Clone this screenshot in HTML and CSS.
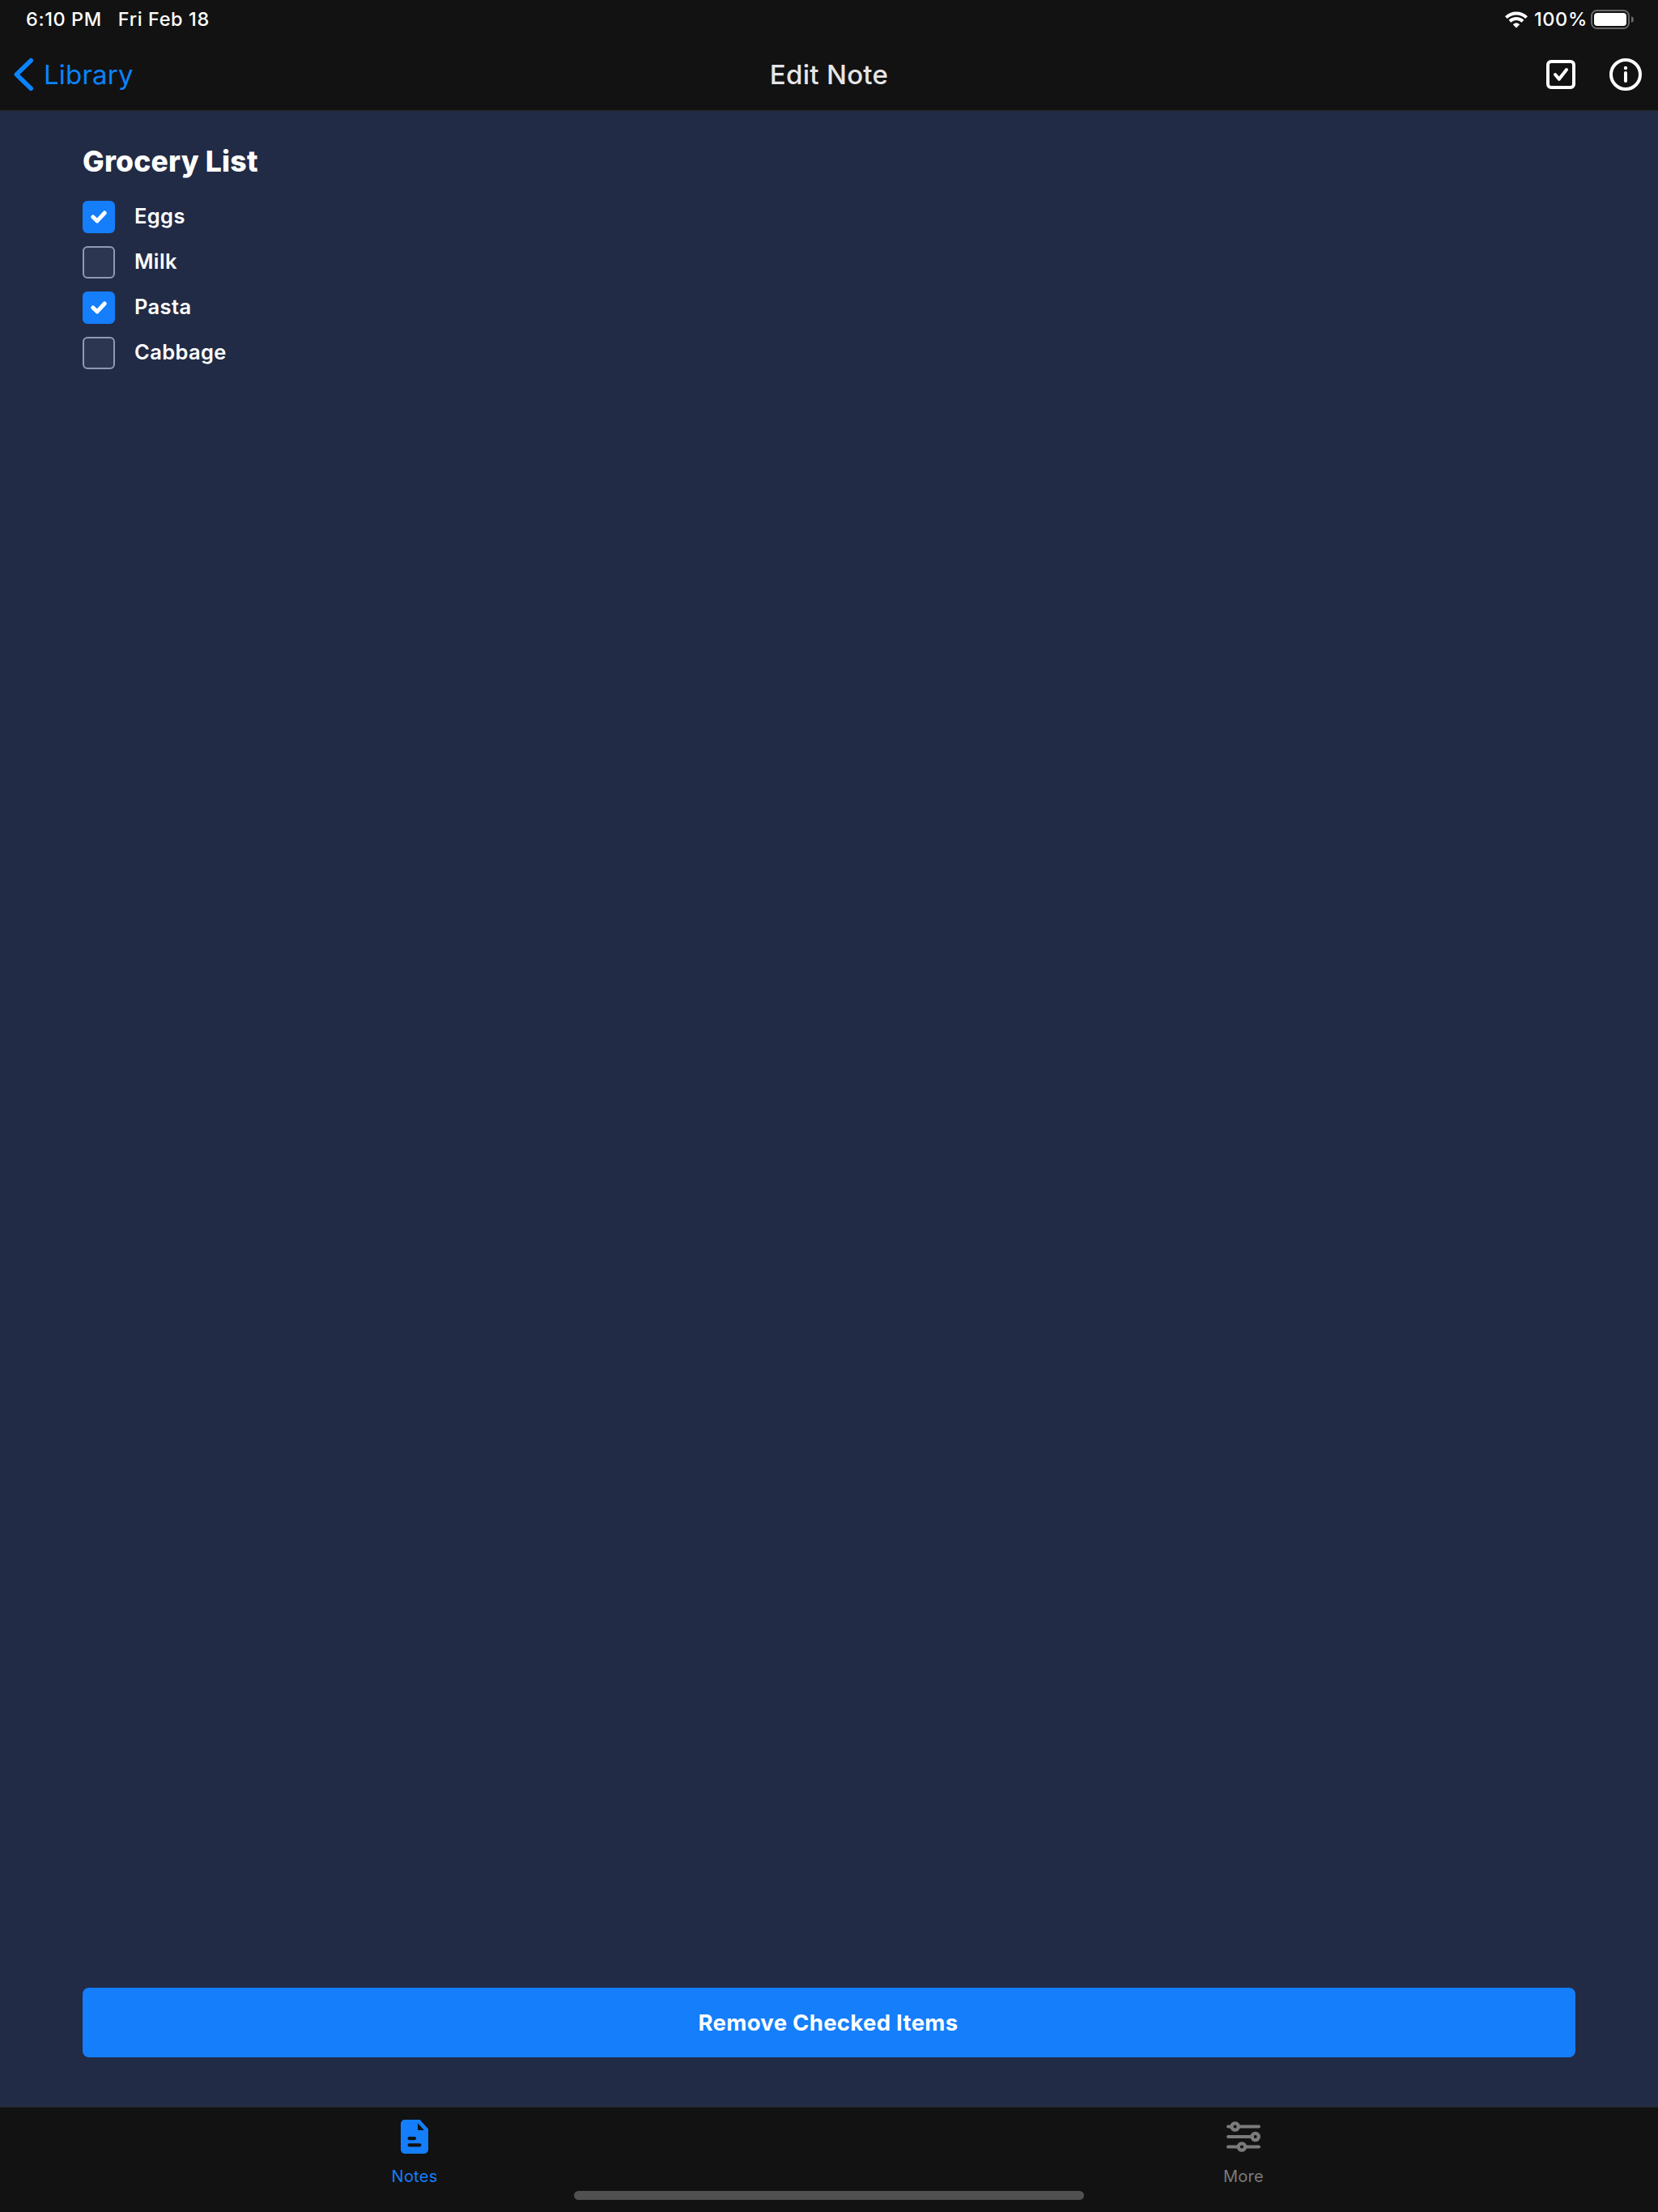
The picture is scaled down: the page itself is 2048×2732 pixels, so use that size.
FILE: index.html
```html
<!DOCTYPE html>
<html lang="en">
<head>
<meta charset="utf-8">
<title>Edit Note</title>
<link rel="stylesheet" href="styles.css">
</head>
<body>
<div class="app">
  <header class="top">
    <div class="status">
      <div class="status-left"><span class="time">6:10 PM</span><span class="date">Fri Feb 18</span></div>
      <div class="status-right">
        <svg class="wifi" width="28" height="21" viewBox="0 0 28 21" fill="none" stroke="#fff" stroke-width="4">
          <path d="M1.4 7.6A18 18 0 0 1 26.6 7.6"/>
          <path d="M6 12.2A11.6 11.6 0 0 1 22 12.2"/>
          <path d="M14 20.6L9.8 16.3Q14 12.4 18.2 16.3Z" fill="#fff" stroke="none"/>
        </svg>
        <span class="percent">100%</span>
        <svg class="battery" width="53" height="24" viewBox="0 0 53 24">
          <rect x="1" y="1" width="46" height="22" rx="6.5" fill="none" stroke="#68686a" stroke-width="2"/>
          <rect x="4" y="4" width="40" height="16" rx="4" fill="#fff"/>
          <path d="M50 8Q53 9 53 12T50 16Z" fill="#68686a"/>
        </svg>
      </div>
    </div>
    <nav class="nav">
      <a class="back">
        <svg width="26" height="44" viewBox="0 0 26 44" fill="none" stroke="#0a84ff" stroke-width="5.6" stroke-linecap="round" stroke-linejoin="round"><path d="M22.2 4.8L4.4 22L22.2 39.2"/></svg>
        <span class="back-label">Library</span>
      </a>
      <h1 class="title">Edit Note</h1>
      <div class="actions">
        <svg width="36" height="36" viewBox="0 0 36 36" fill="none" stroke="#fff" stroke-width="4" stroke-linecap="round" stroke-linejoin="round"><rect x="2" y="2" width="32" height="32" rx="4"/><path d="M11 18L15.8 23.8L25 12"/></svg>
        <svg width="40" height="40" viewBox="0 0 40 40" fill="none" stroke="#fff" stroke-width="4" stroke-linecap="round"><circle cx="20" cy="20" r="18"/><path d="M20 18V28"/><circle cx="20" cy="12" r="2.2" fill="#fff" stroke="none"/></svg>
      </div>
    </nav>
  </header>

  <main class="note">
    <h2 class="heading">Grocery List</h2>
    <ul class="items">
      <li class="item"><span class="box checked"><svg width="20" height="16" viewBox="0 0 20 16"><path d="M2.9 8L8 12.9L17.2 3"/></svg></span><span class="label">Eggs</span></li>
      <li class="item"><span class="box"></span><span class="label">Milk</span></li>
      <li class="item"><span class="box checked"><svg width="20" height="16" viewBox="0 0 20 16"><path d="M2.9 8L8 12.9L17.2 3"/></svg></span><span class="label">Pasta</span></li>
      <li class="item"><span class="box"></span><span class="label">Cabbage</span></li>
    </ul>
    <button class="remove">Remove Checked Items</button>
  </main>

  <footer class="tabs">
    <a class="tab active">
      <svg width="42" height="42" viewBox="0 0 42 42"><path fill="#147efb" fill-rule="evenodd" d="M9 0H27.6L38 11.6V37A5 5 0 0 1 33 42H9A5 5 0 0 1 4 37V5A5 5 0 0 1 9 0ZM25 4.2V13H33ZM14.6 21A2.1 2.1 0 0 0 14.6 25.2H21A2.1 2.1 0 0 0 21 21ZM14.6 29.2A2.1 2.1 0 0 0 14.6 33.4H27.4A2.1 2.1 0 0 0 27.4 29.2Z"/></svg>
      <span class="tab-label">Notes</span>
    </a>
    <a class="tab">
      <svg width="42" height="42" viewBox="0 0 42 42" fill="none" stroke="#7b7b7c" stroke-width="4.2" stroke-linecap="round"><path d="M2.1 8.5H6M15 8.5H39.9M2.1 21H32M2.1 33.5H15M24 33.5H39.9"/><circle cx="10.6" cy="8.5" r="4.2"/><circle cx="35.6" cy="21" r="4.2"/><circle cx="18.9" cy="33.5" r="4.2"/></svg>
      <span class="tab-label">More</span>
    </a>
    <div class="home"></div>
  </footer>
</div>
</body>
</html>
```
FILE: styles.css
```css
* { box-sizing: border-box; }
body { margin: 0; background: #222b45; font-family: Inter, "Liberation Sans", sans-serif; color: #fff; }
.app { width: 2048px; height: 2732px; display: flex; flex-direction: column; }
svg { display: block; flex: none; }

.top { height: 137px; background: #121212; border-bottom: 1px solid #272729; }
.status { height: 48px; display: flex; justify-content: space-between; padding: 0 30px 0 32px; }
.status-left, .status-right { display: flex; align-items: center; white-space: nowrap; font-size: 23.5px; font-weight: 450; letter-spacing: 0.6px; }
.status-left { gap: 20px; }
.time, .date, .percent { padding-bottom: 2px; }
.percent { width: 66px; margin-left: 8px; }
.battery { margin-left: 4px; }

.nav { height: 88px; display: grid; grid-template-columns: 1fr auto 1fr; align-items: center; padding: 0 20px 0 16px; }
.back { display: flex; align-items: center; gap: 12px; color: #0a84ff; font-size: 33px; letter-spacing: 0.2px; }
.title { margin: 0; padding-left: 4px; font-size: 33px; font-weight: 550; letter-spacing: 0.3px; color: #e5e5e7; }
.actions { display: flex; align-items: center; justify-content: flex-end; gap: 42px; }

.note { flex: 1; display: flex; flex-direction: column; padding: 39px 102px 61px; }
.heading { margin: 0; font-size: 35.5px; line-height: 48px; font-weight: 800; letter-spacing: 0.2px; }
.items { list-style: none; margin: 24px 0 0; padding: 0; display: flex; flex-direction: column; gap: 16px; }
.item { display: flex; align-items: center; gap: 24px; height: 40px; }
.box { width: 40px; height: 40px; border: 2px solid #8f9bb3; border-radius: 6px; background: #2c3650; display: grid; place-items: center; }
.checked { background: #147efb; border-color: #147efb; }
.box path { fill: none; stroke: #fff; stroke-width: 5; stroke-linecap: round; stroke-linejoin: round; }
.label { padding-bottom: 3px; font-size: 25.5px; font-weight: 560; letter-spacing: 0.35px; }
.remove { margin-top: auto; height: 86px; padding: 0 2px 0 0; border: 0; border-radius: 8px; background: #147efb; color: #fff; font: 700 27.5px Inter, "Liberation Sans", sans-serif; letter-spacing: 0.3px; }

.tabs { position: relative; height: 130px; background: #121212; border-top: 1px solid #272729; display: grid; grid-template-columns: 1fr 1fr; }
.tab { display: flex; flex-direction: column; align-items: center; padding-top: 15px; color: #7b7b7c; font-size: 20px; letter-spacing: 0.25px; }
.tab-label { line-height: 24px; margin-top: 16px; }
.active { color: #147efb; }
.home { position: absolute; left: 709px; bottom: 15px; width: 630px; height: 11px; border-radius: 6px; background: #505050; }
```
